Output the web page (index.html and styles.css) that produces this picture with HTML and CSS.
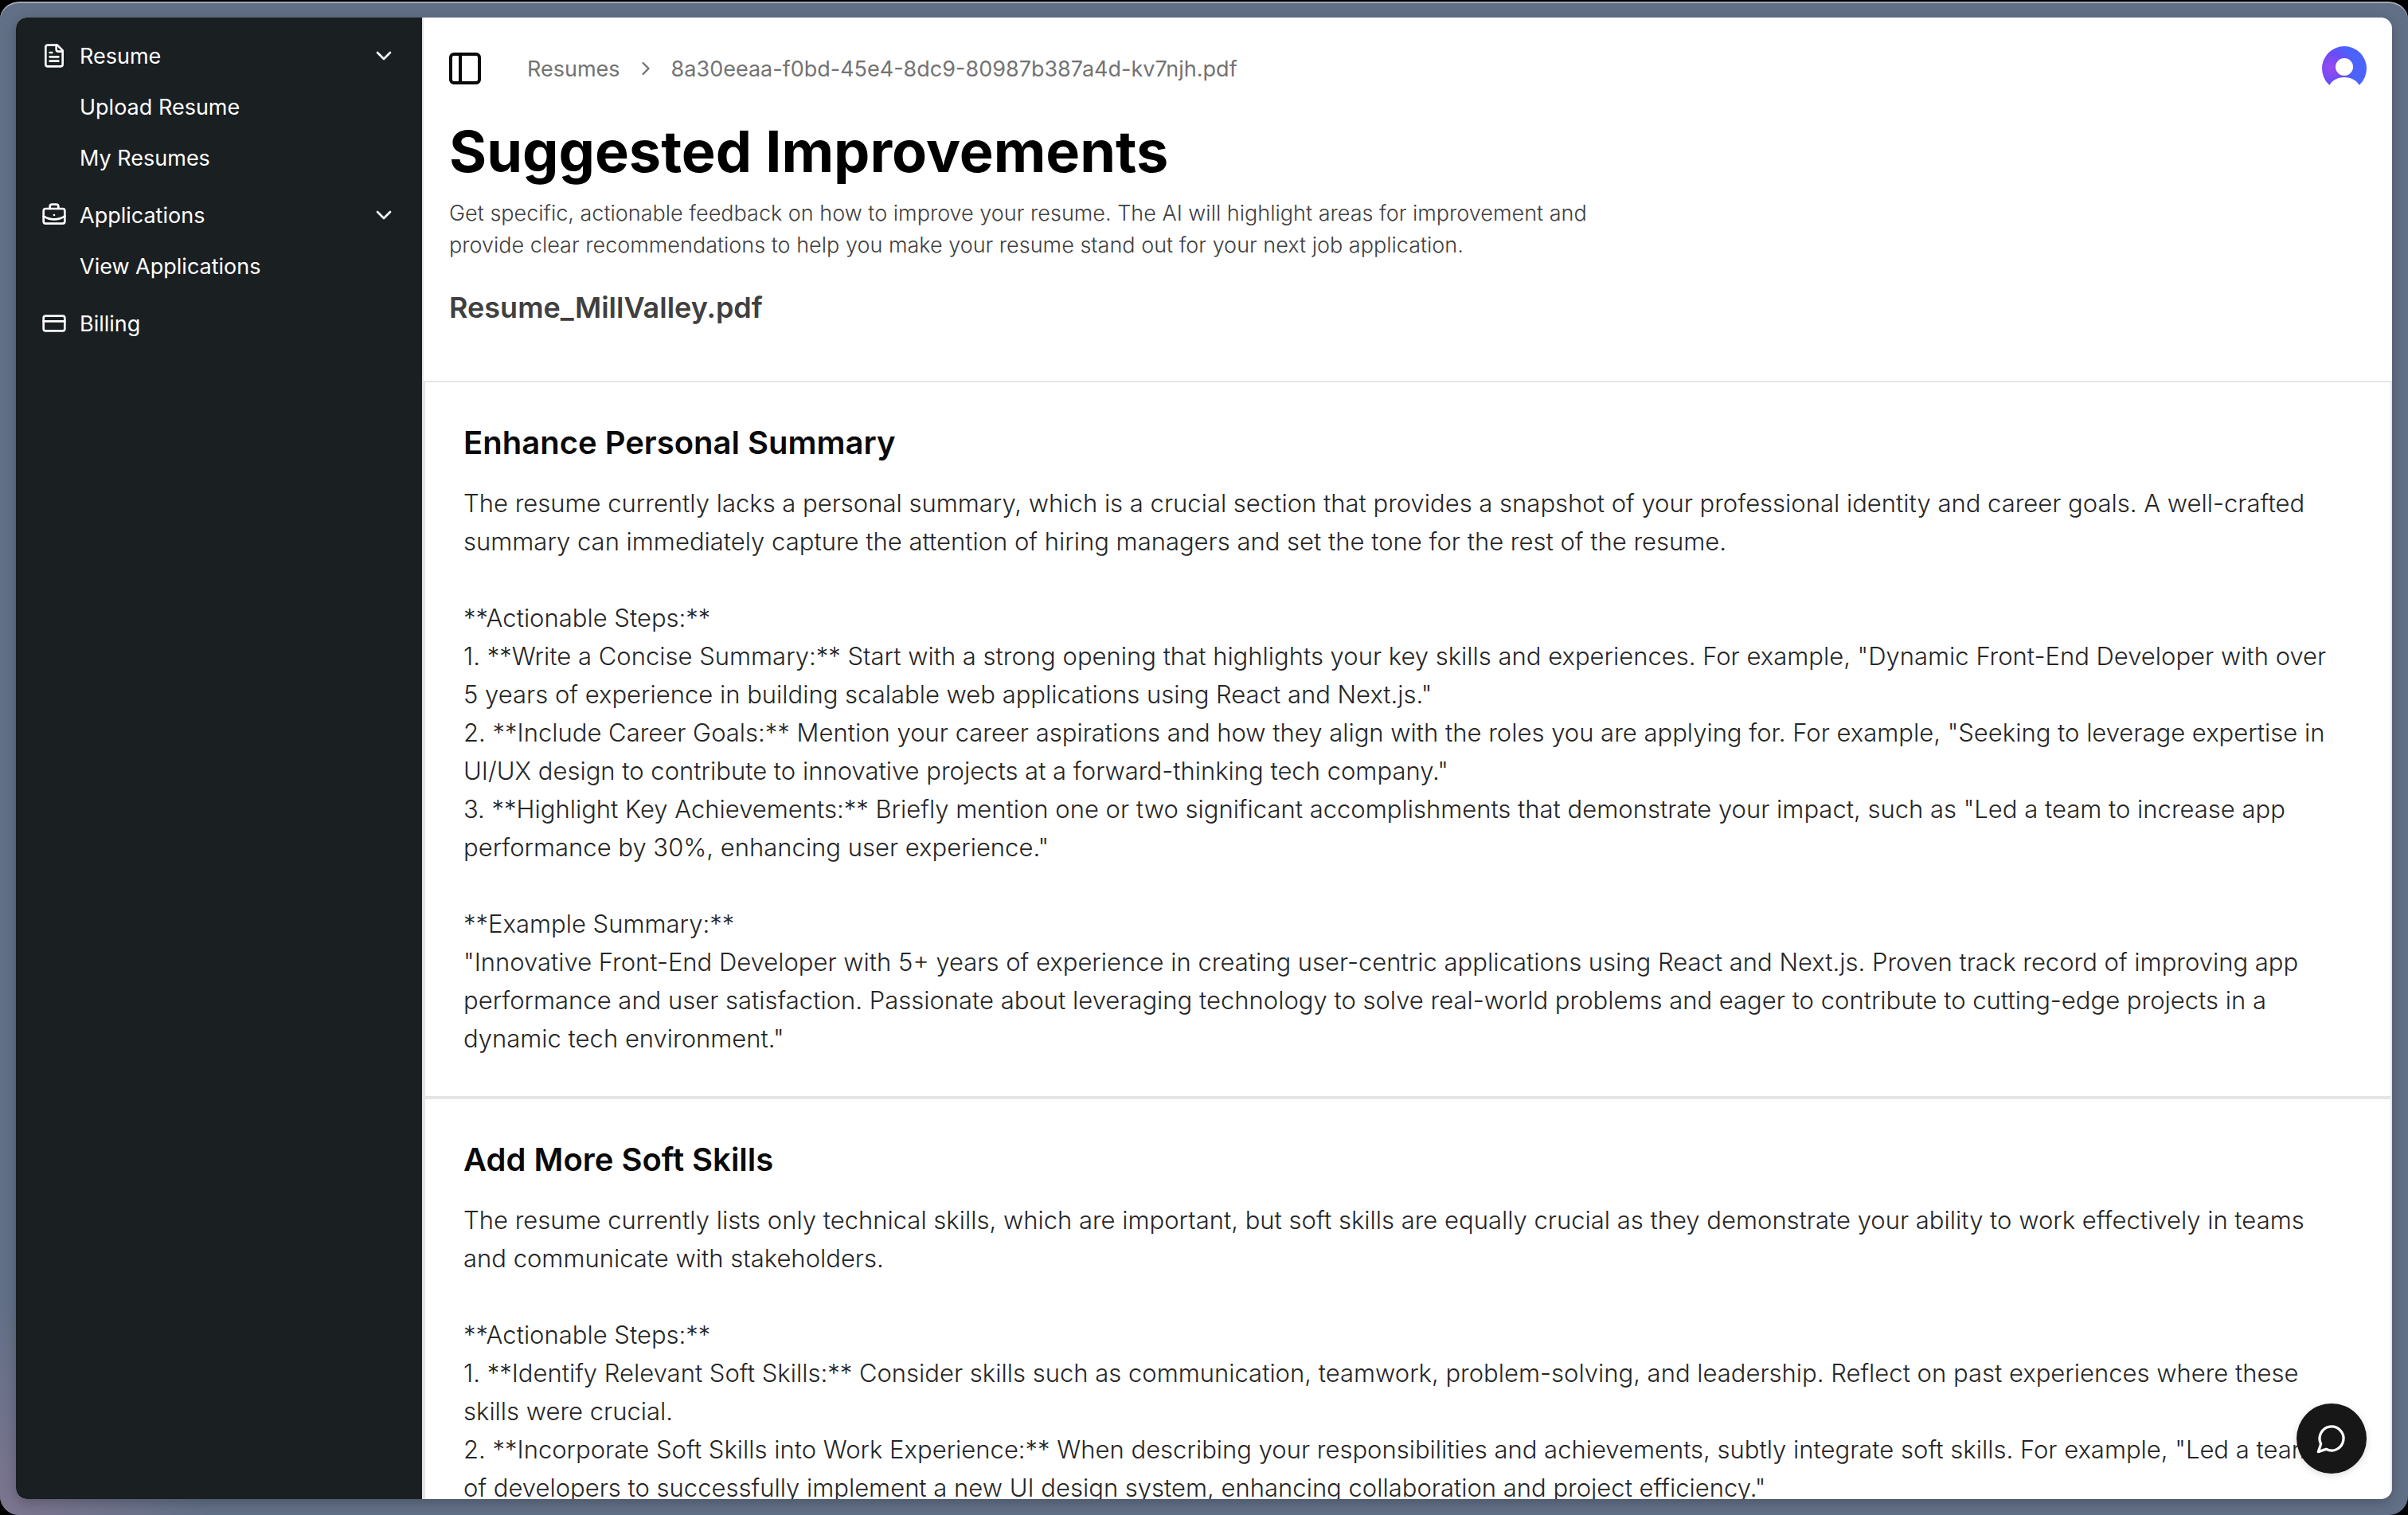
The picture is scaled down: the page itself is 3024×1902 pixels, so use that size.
FILE: index.html
```html
<!DOCTYPE html>
<html lang="en">
<head>
<meta charset="utf-8">
<meta name="viewport" content="width=device-width, initial-scale=1">
<title>Suggested Improvements</title>
<link rel="stylesheet" href="styles.css">
</head>
<body>
<div class="frame">
  <div class="app">
    <aside class="sidebar">
      <nav class="nav" aria-label="Main">
        <div class="nav-group">
          <button class="nav-item" type="button" aria-expanded="true">
            <svg class="icon" viewBox="0 0 24 24" aria-hidden="true"><path d="M15 2H6a2 2 0 0 0-2 2v16a2 2 0 0 0 2 2h12a2 2 0 0 0 2-2V7Z"/><path d="M14 2v4a2 2 0 0 0 2 2h4"/><path d="M10 9H8"/><path d="M16 13H8"/><path d="M16 17H8"/></svg>
            <span class="nav-label">Resume</span>
            <svg class="icon" viewBox="0 0 24 24" aria-hidden="true"><path d="m6 9 6 6 6-6"/></svg>
          </button>
          <a class="nav-item nav-sub" href="#upload">Upload Resume</a>
          <a class="nav-item nav-sub" href="#resumes">My Resumes</a>
        </div>
        <div class="nav-group">
          <button class="nav-item" type="button" aria-expanded="true">
            <svg class="icon" viewBox="0 0 24 24" aria-hidden="true"><path d="M12 12h.01"/><path d="M16 6V4a2 2 0 0 0-2-2h-4a2 2 0 0 0-2 2v2"/><path d="M22 13a18.15 18.15 0 0 1-20 0"/><rect width="20" height="14" x="2" y="6" rx="2"/></svg>
            <span class="nav-label">Applications</span>
            <svg class="icon" viewBox="0 0 24 24" aria-hidden="true"><path d="m6 9 6 6 6-6"/></svg>
          </button>
          <a class="nav-item nav-sub" href="#applications">View Applications</a>
        </div>
        <div class="nav-group">
          <a class="nav-item" href="#billing">
            <svg class="icon" viewBox="0 0 24 24" aria-hidden="true"><rect width="20" height="14" x="2" y="5" rx="2"/><path d="M2 10h20"/></svg>
            <span class="nav-label">Billing</span>
          </a>
        </div>
      </nav>
    </aside>

    <main class="main">
      <header class="topbar">
        <button class="icon-button" type="button" aria-label="Toggle sidebar">
          <svg class="icon icon-large" viewBox="0 0 24 24" aria-hidden="true"><rect width="18" height="18" x="3" y="3" rx="2"/><path d="M9 3v18"/></svg>
        </button>
        <nav class="breadcrumb" aria-label="Breadcrumb">
          <a href="#resumes">Resumes</a>
          <svg class="icon icon-small" viewBox="0 0 24 24" aria-hidden="true"><path d="m9 18 6-6-6-6"/></svg>
          <a href="#file">8a30eeaa-f0bd-45e4-8dc9-80987b387a4d-kv7njh.pdf</a>
        </nav>
        <button class="avatar" type="button" aria-label="Account">
          <svg viewBox="0 0 56 56" aria-hidden="true">
            <defs>
              <radialGradient id="avatar-fill" gradientUnits="userSpaceOnUse" cx="11" cy="27" r="30">
                <stop offset="0" stop-color="#9a4af0"/>
                <stop offset="0.6" stop-color="#6a4cf6"/>
                <stop offset="1" stop-color="#4c63fb"/>
              </radialGradient>
            </defs>
            <circle cx="28" cy="28" r="28" fill="url(#avatar-fill)"/>
            <circle cx="28" cy="26" r="11" fill="#fff"/>
            <path d="M9 50C12 43 19 39 28 39S44 43 47 50V56H9Z" fill="#fff"/>
          </svg>
        </button>
      </header>

      <section class="intro">
        <h1>Suggested Improvements</h1>
        <p class="lead">Get specific, actionable feedback on how to improve your resume. The AI will highlight areas for improvement and provide clear recommendations to help you make your resume stand out for your next job application.</p>
        <h2 class="file-name">Resume_MillValley.pdf</h2>
      </section>

      <div class="cards">
        <article class="card">
          <h3>Enhance Personal Summary</h3>
          <p>The resume currently lacks a personal summary, which is a crucial section that provides a snapshot of your professional identity and career goals. A well-crafted summary can immediately capture the attention of hiring managers and set the tone for the rest of the resume.

**Actionable Steps:**
1. **Write a Concise Summary:** Start with a strong opening that highlights your key skills and experiences. For example, "Dynamic Front-End Developer with over 5 years of experience in building scalable web applications using React and Next.js."
2. **Include Career Goals:** Mention your career aspirations and how they align with the roles you are applying for. For example, "Seeking to leverage expertise in UI/UX design to contribute to innovative projects at a forward-thinking tech company."
3. **Highlight Key Achievements:** Briefly mention one or two significant accomplishments that demonstrate your impact, such as "Led a team to increase app performance by 30%, enhancing user experience."

**Example Summary:**
"Innovative Front-End Developer with 5+ years of experience in creating user-centric applications using React and Next.js. Proven track record of improving app performance and user satisfaction. Passionate about leveraging technology to solve real-world problems and eager to contribute to cutting-edge projects in a dynamic tech environment."</p>
        </article>
        <article class="card">
          <h3>Add More Soft Skills</h3>
          <p>The resume currently lists only technical skills, which are important, but soft skills are equally crucial as they demonstrate your ability to work effectively in teams and communicate with stakeholders.

**Actionable Steps:**
1. **Identify Relevant Soft Skills:** Consider skills such as communication, teamwork, problem-solving, and leadership. Reflect on past experiences where these skills were crucial.
2. **Incorporate Soft Skills into Work Experience:** When describing your responsibilities and achievements, subtly integrate soft skills. For example, "Led a team of&nbsp;developers to successfully implement a new UI design system, enhancing collaboration and project efficiency."</p>
        </article>
      </div>
    </main>

    <button class="chat-button" type="button" aria-label="Open chat">
      <svg class="icon icon-chat" viewBox="0 0 24 24" aria-hidden="true"><path d="M7.9 20A9 9 0 1 0 4 16.1L2 22Z"/></svg>
    </button>
  </div>
</div>
</body>
</html>
```
FILE: styles.css
```css
*, *::before, *::after { box-sizing: border-box; }

body {
  margin: 0;
  background: #000;
  color: #0a0a0a;
  font-family: Inter, "Noto Sans", sans-serif;
  font-size: 27px;
  line-height: 40px;
}

h1, h2, h3, p { margin: 0; }
a { color: inherit; text-decoration: none; }

button {
  padding: 0;
  border: 0;
  background: none;
  color: inherit;
  font: inherit;
  text-align: left;
  cursor: pointer;
}

.icon {
  flex: none;
  width: 32px;
  height: 32px;
  fill: none;
  stroke: currentColor;
  stroke-width: 2;
  stroke-linecap: round;
  stroke-linejoin: round;
}
.icon-small { width: 28px; height: 28px; }
.icon-large { width: 48px; height: 48px; }
.icon-chat { width: 40px; height: 40px; }

/* Window frame around the app */
.frame {
  display: flex;
  height: 100vh;
  padding: 20px;
  border-top: 2px solid #000;
  border-radius: 24px;
  background:
    radial-gradient(circle at 0 100%, #7d7590 0, #7d759000 260px),
    #627087;
  box-shadow: inset 0 2px 0 #a3a9b3;
}

.app {
  position: relative;
  display: flex;
  flex: 1;
  min-width: 0;
  overflow: hidden;
  border-radius: 14px;
  background: #fff;
  box-shadow: 0 4px 16px #00000040;
}

/* Sidebar */
.sidebar {
  flex: none;
  width: 512px;
  padding: 16px 32px;
  border-right: 2px solid #e5e5e5;
  background: #1a1f22;
  color: #fff;
}
.nav { display: flex; flex-direction: column; gap: 8px; }
.nav-group { display: flex; flex-direction: column; }
.nav-item {
  display: flex;
  align-items: center;
  gap: 16px;
  height: 64px;
}
.nav-label { flex: 1; padding-top: 2px; }
.nav-sub { padding: 2px 0 0 48px; }

/* Main column */
.main {
  display: flex;
  flex: 1;
  flex-direction: column;
  min-width: 0;
  overflow: hidden;
}
.topbar {
  display: flex;
  flex: none;
  align-items: center;
  height: 128px;
  padding: 0 32px 0 28px;
}
.icon-button { display: flex; }
.breadcrumb {
  display: flex;
  flex: 1;
  align-items: center;
  gap: 18px;
  margin-left: 54px;
  color: #737373;
}
.breadcrumb a { padding-top: 2px; }
.avatar { width: 56px; height: 56px; }
.avatar svg { display: block; }

.intro {
  flex: none;
  padding: 0 32px 64px;
}
h1 {
  color: #000;
  font-size: 72px;
  font-weight: 700;
  line-height: 80px;
}
.lead {
  max-width: 1480px;
  margin-top: 18px;
  color: #404040;
  font-weight: 300;
}
.file-name {
  margin-top: 30px;
  color: #404040;
  font-size: 36px;
  font-weight: 600;
  line-height: 56px;
}

.cards { flex: none; }
.card {
  padding: 48px 56px 48px 48px;
  border: 2px solid #e5e5e5;
}
.card h3 {
  font-size: 40px;
  font-weight: 600;
  line-height: 56px;
}
.card p {
  margin-top: 24px;
  color: #262626;
  font-size: 31px;
  font-weight: 300;
  line-height: 48px;
  white-space: pre-wrap;
}

.chat-button {
  position: absolute;
  right: 32px;
  bottom: 32px;
  display: flex;
  align-items: center;
  justify-content: center;
  width: 88px;
  height: 88px;
  border-radius: 50%;
  background: #171717;
  color: #fff;
  box-shadow: 0 2px 8px #00000026;
}
```
